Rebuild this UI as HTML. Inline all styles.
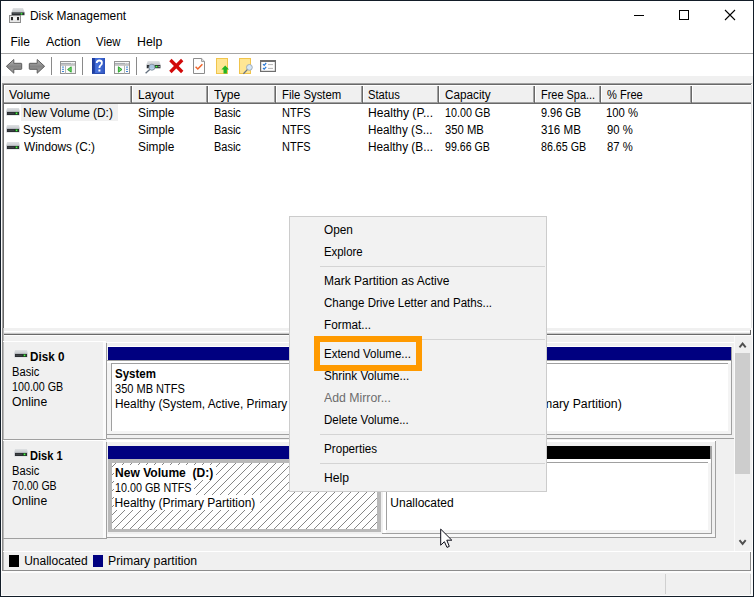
<!DOCTYPE html>
<html>
<head>
<meta charset="utf-8">
<title>Disk Management</title>
<style>
*{box-sizing:border-box;margin:0;padding:0}
html,body{width:754px;height:597px;overflow:hidden;background:#f0f0f0}
body{position:relative;font-family:"Liberation Sans",sans-serif;font-size:12px;color:#000;line-height:14px}
.a{position:absolute}
.t{position:absolute;white-space:nowrap;transform-origin:0 0;height:14px;line-height:14px}
.b{font-weight:bold}
svg{position:absolute;overflow:visible}
</style>
</head>
<body>
<!-- title bar / menu / toolbar -->
<div class="a" style="left:1px;top:1px;width:752px;height:52px;background:#fff"></div>
<div class="a" style="left:1px;top:53px;width:752px;height:1px;background:#a6a6a6"></div>
<div class="a" style="left:1px;top:54px;width:752px;height:22px;background:#fff"></div>

<!-- window controls -->
<svg style="left:634px;top:10px" width="110" height="12" viewBox="0 0 110 12">
 <path d="M0 5.5H10" stroke="#000" stroke-width="1" fill="none"/>
 <rect x="45.5" y="0.5" width="9" height="9" stroke="#000" stroke-width="1" fill="none"/>
 <path d="M91 0L101 10M101 0L91 10" stroke="#000" stroke-width="1.1" fill="none"/>
</svg>

<!-- title icon -->
<svg style="left:9px;top:8px" width="16" height="15" viewBox="0 0 16 15">
 <defs><linearGradient id="dtop" x1="0" y1="0" x2="0" y2="1"><stop offset="0" stop-color="#e2e4e6"/><stop offset="1" stop-color="#c2c6ca"/></linearGradient></defs>
 <path d="M4 0H14L15.5 4.3H2.6Z" fill="url(#dtop)"/>
 <rect x="2.6" y="4.3" width="12.9" height="2.9" fill="#2c2f33"/>
 <rect x="3.5" y="5" width="7.5" height="1" fill="#4a4e52"/>
 <circle cx="12.5" cy="5.7" r="1" fill="#35e035"/>
 <rect x="0.5" y="7.5" width="11" height="7" fill="#e8e8e8" stroke="#8c8c8c"/>
 <rect x="2" y="9" width="2" height="3.2" fill="#2a2a2a"/>
 <rect x="8" y="9" width="2" height="3.2" fill="#2a2a2a"/>
 <rect x="4.5" y="9.6" width="3" height="2" fill="#fafafa"/>
</svg>

<!-- toolbar arrows -->
<svg style="left:6px;top:59px" width="16" height="15" viewBox="0 0 16 15">
 <defs><linearGradient id="ag" x1="0" y1="0" x2="0" y2="1"><stop offset="0" stop-color="#bcbcbc"/><stop offset="0.5" stop-color="#858585"/><stop offset="1" stop-color="#a4a4a4"/></linearGradient></defs>
 <path d="M0.4 7.3L7.8 0.5V4.3H15.2Q15.7 4.3 15.7 4.8V9.8Q15.7 10.3 15.2 10.3H7.8V14.2Z" fill="url(#ag)" stroke="#5c5c5c" stroke-width="1" stroke-linejoin="round"/>
</svg>
<svg style="left:29px;top:59px" width="16" height="15" viewBox="0 0 16 15">
 <path d="M15.6 7.3L8.2 0.5V4.3H0.8Q0.3 4.3 0.3 4.8V9.8Q0.3 10.3 0.8 10.3H8.2V14.2Z" fill="url(#ag)" stroke="#5c5c5c" stroke-width="1" stroke-linejoin="round"/>
</svg>
<!-- separators -->
<div class="a" style="left:51px;top:57px;width:1px;height:18px;background:#8a8a8a"></div>
<div class="a" style="left:82px;top:57px;width:1px;height:18px;background:#8a8a8a"></div>
<div class="a" style="left:136px;top:57px;width:1px;height:18px;background:#8a8a8a"></div>

<!-- show/hide console tree -->
<svg style="left:60px;top:61px" width="16" height="13" viewBox="0 0 16 13">
 <rect x="0.5" y="0.5" width="15" height="12" fill="#fcfcfc" stroke="#949494"/>
 <rect x="1" y="1" width="14" height="1" fill="#f4f4f4"/>
 <rect x="1" y="2" width="14" height="1.2" fill="#a9adb2"/>
 <rect x="11.2" y="1.3" width="1.3" height="1.3" fill="#fff"/><rect x="13.2" y="1.3" width="1.3" height="1.3" fill="#fff"/>
 <path d="M1 4H15" stroke="#9a9a9a" stroke-width="1"/>
 <path d="M5.5 4.5V12.5" stroke="#b4b4b4" stroke-width="1"/>
 <rect x="2" y="5.6" width="2" height="1" fill="#3f86d6"/>
 <rect x="2" y="7.8" width="2" height="1" fill="#3f86d6"/>
 <rect x="2" y="10" width="2" height="1" fill="#3f86d6"/>
 <path d="M7.6 8.5L11.2 5.8V11.2Z" fill="#6ed06e" stroke="#23a023" stroke-width="0.9" stroke-linejoin="round"/>
 <rect x="12.2" y="5" width="2.6" height="7" fill="#f0f0f0"/>
</svg>
<!-- help -->
<svg style="left:92px;top:58px" width="13" height="16" viewBox="0 0 13 16">
 <defs><linearGradient id="hg" x1="0" y1="0" x2="1" y2="0"><stop offset="0" stop-color="#1b3896"/><stop offset="0.22" stop-color="#2446ac"/><stop offset="0.28" stop-color="#4470dc"/><stop offset="0.8" stop-color="#3a62cc"/><stop offset="1" stop-color="#2c50b8"/></linearGradient></defs>
 <rect x="0" y="0" width="13" height="16" fill="url(#hg)"/>
 <rect x="0" y="15" width="13" height="1" fill="#2a4cae"/>
 <path d="M4.7 5.1Q4.7 2.5 7.3 2.5Q9.9 2.5 9.9 4.9Q9.9 6.3 8.5 7.4Q7.4 8.2 7.4 10" stroke="#fff" stroke-width="1.8" fill="none"/>
 <rect x="6.4" y="11.5" width="2" height="2" fill="#fff"/>
</svg>
<!-- action pane -->
<svg style="left:114px;top:61px" width="16" height="13" viewBox="0 0 16 13">
 <rect x="0.5" y="0.5" width="15" height="12" fill="#fcfcfc" stroke="#949494"/>
 <rect x="1" y="1" width="14" height="1" fill="#f4f4f4"/>
 <rect x="1" y="2" width="14" height="1.2" fill="#a9adb2"/>
 <rect x="11.2" y="1.3" width="1.3" height="1.3" fill="#fff"/><rect x="13.2" y="1.3" width="1.3" height="1.3" fill="#fff"/>
 <path d="M1 4H15" stroke="#9a9a9a" stroke-width="1"/>
 <path d="M10.5 4.5V12.5" stroke="#b4b4b4" stroke-width="1"/>
 <rect x="12" y="5.6" width="2" height="1" fill="#3f86d6"/>
 <rect x="12" y="7.8" width="2" height="1" fill="#3f86d6"/>
 <rect x="12" y="10" width="2" height="1" fill="#3f86d6"/>
 <path d="M8 8.5L4.4 5.8V11.2Z" fill="#6ed06e" stroke="#23a023" stroke-width="0.9" stroke-linejoin="round"/>
</svg>
<!-- disk + magnifier -->
<svg style="left:145px;top:60px" width="16" height="14" viewBox="0 0 16 14">
 <path d="M1.2 4.8L2.8 1H14.2L15.8 4.8V8.6H1.2Z" fill="#e4e6e8"/>
 <path d="M3 1H14L15.5 5H1.5Z" fill="url(#dtop)"/>
 <rect x="1.8" y="5" width="13.6" height="3.2" fill="#2c2f33"/>
 <rect x="10.2" y="5.7" width="2.6" height="1.8" fill="#1c8a1c"/>
 <rect x="10.8" y="6" width="1.5" height="1.2" fill="#52f652"/>
 <rect x="13.5" y="6" width="1.2" height="1.2" fill="#cfcfcf"/>
 <circle cx="6.9" cy="7.2" r="3" fill="#b4d2ee" fill-opacity="0.92" stroke="#7f8c9a" stroke-width="0.9"/>
 <path d="M4.7 9.4L0.6 13.2" stroke="#64707e" stroke-width="1.3"/>
</svg>
<!-- red X -->
<svg style="left:169px;top:59px" width="15" height="14" viewBox="0 0 15 14">
 <path d="M1.4 1L13.2 13M13.2 1L1.4 13" stroke="#d20a0a" stroke-width="3.3" fill="none"/>
</svg>
<!-- doc with check -->
<svg style="left:193px;top:58px" width="13" height="16" viewBox="0 0 13 16">
 <path d="M0.5 0.5H8.6L11.5 3.4V15.5H0.5Z" fill="#fdfdfd" stroke="#8c8c8c"/>
 <path d="M8.6 0.5V3.4H11.5" fill="#ececec" stroke="#8c8c8c" stroke-width="0.9"/>
 <path d="M2.6 8.8L4.8 11L9.4 6.2" stroke="#f0642a" stroke-width="1.5" fill="none"/>
</svg>
<!-- yellow doc up arrow -->
<svg style="left:216px;top:58px" width="13" height="16" viewBox="0 0 13 16">
 <rect x="0.5" y="0.5" width="11" height="15" fill="#ffe694" stroke="#f0c44c"/>
 <path d="M9.2 7.4L13 11.6H10.9V15.6H7.5V11.6H5.4Z" fill="#22b422"/>
</svg>
<!-- yellow doc magnifier -->
<svg style="left:239px;top:58px" width="14" height="16" viewBox="0 0 14 16">
 <rect x="0.5" y="0.5" width="11" height="15" fill="#ffe694" stroke="#f0c44c"/>
 <circle cx="10.4" cy="9.4" r="2.9" fill="#d4e6f6" stroke="#9aa6b4" stroke-width="0.9"/>
 <path d="M8.3 11.6L4.4 15.8" stroke="#6a7684" stroke-width="1.3"/>
</svg>
<!-- checklist -->
<svg style="left:260px;top:60px" width="16" height="12" viewBox="0 0 16 12">
 <rect x="0.6" y="0.6" width="14.8" height="10.8" fill="#fdfdfd" stroke="#6e6e6e" stroke-width="1.2"/>
 <rect x="0.6" y="0.6" width="14.8" height="1.4" fill="#6e6e6e"/>
 <path d="M3 4.2L4.2 5.4L6.2 3" stroke="#2a7ad8" stroke-width="1.2" fill="none"/>
 <path d="M3 8L4.2 9.2L6.2 6.8" stroke="#2a7ad8" stroke-width="1.2" fill="none"/>
 <path d="M8 4.6H13M8 8.4H13" stroke="#b4b4b4" stroke-width="1"/>
</svg>


<!-- top list -->
<div class="a" style="left:2px;top:83px;width:750px;height:245px;background:#fff"></div>
<div class="a" style="left:2px;top:83px;width:750px;height:1px;background:#a0a0a0"></div>
<div class="a" style="left:2px;top:83px;width:1px;height:245px;background:#a0a0a0"></div>
<div class="a" style="left:3px;top:84px;width:749px;height:1px;background:#696969"></div>
<div class="a" style="left:3px;top:84px;width:1px;height:244px;background:#696969"></div>
<!-- header -->
<div class="a" style="left:4px;top:85px;width:748px;height:18px;background:#f0f0f0"></div>
<div class="a" style="left:4px;top:102px;width:748px;height:1px;background:#a0a0a0"></div>
<div class="a" style="left:4px;top:103px;width:748px;height:1px;background:#696969"></div>
<!--HEADERDIV-->
<!-- selected item -->
<div class="a" style="left:21px;top:104px;width:97px;height:17px;background:#f0f0f0"></div>

<!-- splitter -->
<div class="a" style="left:4px;top:331px;width:746px;height:1px;background:#fff"></div>
<div class="a" style="left:4px;top:333px;width:746px;height:1px;background:#c8c8c8"></div>
<div class="a" style="left:750px;top:330px;width:1px;height:5px;background:#696969"></div>
<!-- lower panel -->
<div class="a" style="left:3px;top:334px;width:748px;height:1px;background:#696969"></div>
<div class="a" style="left:3px;top:335px;width:749px;height:1px;background:#fcfcfc"></div>
<div class="a" style="left:2px;top:328px;width:1px;height:243px;background:#8c8c8c"></div>
<div class="a" style="left:3px;top:328px;width:1px;height:243px;background:#b8b8b8"></div>

<!-- disk label 0 -->
<div class="a" style="left:3px;top:341px;width:103px;height:1px;background:#fff"></div>
<div class="a" style="left:103px;top:342px;width:3px;height:97px;background:#fbfbfb"></div>
<div class="a" style="left:106px;top:343px;width:1px;height:96px;background:#a0a0a0"></div>
<div class="a" style="left:3px;top:439px;width:103px;height:1px;background:#a0a0a0"></div>
<!-- disk label 1 -->
<div class="a" style="left:3px;top:440px;width:103px;height:1px;background:#fff"></div>
<div class="a" style="left:103px;top:441px;width:3px;height:97px;background:#fbfbfb"></div>
<div class="a" style="left:106px;top:442px;width:1px;height:96px;background:#a0a0a0"></div>
<div class="a" style="left:3px;top:538px;width:104px;height:1px;background:#a0a0a0"></div>
<div class="a" style="left:107px;top:537px;width:609px;height:1px;background:#a0a0a0"></div>

<!-- disk 0 partitions -->
<div class="a" style="left:107px;top:342px;width:627px;height:1px;background:#fff"></div>
<div class="a" style="left:107px;top:346px;width:625px;height:1px;background:#fff"></div>
<div class="a" style="left:108px;top:347px;width:623px;height:13px;background:#000080"></div>
<div class="a" style="left:107px;top:360px;width:625px;height:1px;background:#a0a0a0"></div>
<div class="a" style="left:107px;top:361px;width:625px;height:74px;background:#f4f4f4"></div>
<div class="a" style="left:107px;top:361px;width:625px;height:2px;background:#fff"></div>
<div class="a" style="left:111px;top:363px;width:617px;height:68px;background:#fff;border-left:1px solid #a0a0a0;border-top:1px solid #a0a0a0"></div>
<div class="a" style="left:731px;top:347px;width:1px;height:88px;background:#a0a0a0"></div>
<div class="a" style="left:107px;top:434px;width:625px;height:1px;background:#a0a0a0"></div>
<div class="a" style="left:107px;top:438px;width:627px;height:1px;background:#a0a0a0"></div>

<!-- disk 1 partitions -->
<div class="a" style="left:107px;top:440px;width:609px;height:2px;background:#fff"></div>
<div class="a" style="left:715px;top:441px;width:1px;height:97px;background:#a0a0a0"></div>
<div class="a" style="left:108px;top:446px;width:273px;height:13px;background:#000080"></div>
<div class="a" style="left:385px;top:446px;width:325px;height:13px;background:#000"></div>
<div class="a" style="left:710px;top:446px;width:2px;height:13px;background:#a0a0a0"></div>
<!-- selected partition -->
<div class="a" style="left:108px;top:459px;width:273px;height:73px;background:#b9b9b9"></div>
<svg style="left:112px;top:463px" width="265" height="66" viewBox="0 0 265 66" shape-rendering="crispEdges">
 <defs><pattern id="hatch" width="8" height="8" patternUnits="userSpaceOnUse" x="4" y="0">
  <rect width="8" height="8" fill="#fff"/>
  <path d="M0 7h1v1h-1zM1 6h1v1h-1zM2 5h1v1h-1zM3 4h1v1h-1zM4 3h1v1h-1zM5 2h1v1h-1zM6 1h1v1h-1zM7 0h1v1h-1z" fill="#868686"/>
 </pattern></defs>
 <rect width="265" height="66" fill="url(#hatch)"/>
</svg>
<div class="a" style="left:114px;top:465px;width:102px;height:15px;background:#fff"></div>
<div class="a" style="left:114px;top:480px;width:80px;height:15px;background:#fff"></div>
<div class="a" style="left:114px;top:495px;width:146px;height:15px;background:#fff"></div>
<!-- unallocated -->
<div class="a" style="left:383px;top:459px;width:329px;height:76px;background:#f4f4f4"></div>
<div class="a" style="left:383px;top:459px;width:329px;height:4px;background:#fff"></div>
<div class="a" style="left:383px;top:459px;width:3px;height:74px;background:#fff"></div>
<div class="a" style="left:386px;top:462px;width:322px;height:68px;background:#fff;border-left:1px solid #a0a0a0;border-top:1px solid #a0a0a0"></div>
<div class="a" style="left:711px;top:459px;width:1px;height:75px;background:#a0a0a0"></div>
<div class="a" style="left:382px;top:533px;width:330px;height:1px;background:#a0a0a0"></div>
<div class="a" style="left:107px;top:534px;width:608px;height:3px;background:#f8f8f8"></div>

<!-- scrollbar -->
<div class="a" style="left:734px;top:336px;width:17px;height:215px;background:#f0f0f0"></div>
<div class="a" style="left:734px;top:336px;width:1px;height:215px;background:#fafafa"></div>
<div class="a" style="left:735px;top:353px;width:15px;height:121px;background:#cdcdcd"></div>
<svg style="left:739px;top:341px" width="8" height="7" viewBox="0 0 8 7"><path d="M0.5 6.3L3.6 2.6L6.7 6.3" stroke="#505050" stroke-width="1.9" fill="none"/></svg>
<svg style="left:739px;top:539px" width="8" height="7" viewBox="0 0 8 7"><path d="M0.5 1.2L3.6 4.9L6.7 1.2" stroke="#505050" stroke-width="1.9" fill="none"/></svg>


<!-- legend -->
<div class="a" style="left:3px;top:551px;width:748px;height:1px;background:#fff"></div>
<div class="a" style="left:9px;top:555px;width:10px;height:12px;background:#000"></div>
<div class="a" style="left:93px;top:555px;width:10px;height:12px;background:#000080"></div>
<div class="a" style="left:750px;top:552px;width:1px;height:19px;background:#8c8c8c"></div>
<div class="a" style="left:2px;top:570px;width:749px;height:1px;background:#8c8c8c"></div>
<div class="a" style="left:2px;top:571px;width:750px;height:2px;background:#fcfcfc"></div>
<!-- status bar -->
<div class="a" style="left:665px;top:574px;width:1px;height:20px;background:#d0d0d0"></div>
<div class="a" style="left:750px;top:574px;width:1px;height:20px;background:#d0d0d0"></div>

<div class="t" style="left:29.61px;top:9.0px;transform:scaleX(0.9943);">Disk Management</div>
<div class="t" style="left:10.50px;top:35.0px;">File</div>
<div class="t" style="left:45.50px;top:35.0px;transform:scaleX(1.0382);">Action</div>
<div class="t" style="left:96.20px;top:35.0px;transform:scaleX(0.9476);">View</div>
<div class="t" style="left:136.67px;top:35.0px;transform:scaleX(1.0280);">Help</div>
<div class="t" style="left:9.30px;top:87.5px;transform:scaleX(1.0278);">Volume</div>
<div class="t" style="left:137.61px;top:87.5px;transform:scaleX(0.9943);">Layout</div>
<div class="t" style="left:214.15px;top:87.5px;transform:scaleX(1.0099);">Type</div>
<div class="t" style="left:281.55px;top:87.5px;transform:scaleX(0.9459);">File System</div>
<div class="t" style="left:368.33px;top:87.5px;transform:scaleX(0.9333);">Status</div>
<div class="t" style="left:444.71px;top:87.5px;transform:scaleX(0.9795);">Capacity</div>
<div class="t" style="left:540.99px;top:87.5px;transform:scaleX(0.9118);">Free Spa...</div>
<div class="t" style="left:606.94px;top:87.5px;transform:scaleX(0.9245);">% Free</div>
<div class="t" style="left:22.61px;top:105.5px;transform:scaleX(0.9910);">New Volume (D:)</div>
<div class="t" style="left:138.11px;top:105.5px;transform:scaleX(0.9874);">Simple</div>
<div class="t" style="left:214.29px;top:105.5px;transform:scaleX(0.9143);">Basic</div>
<div class="t" style="left:281.59px;top:105.5px;transform:scaleX(0.9143);">NTFS</div>
<div class="t" style="left:367.79px;top:105.5px;transform:scaleX(1.0080);">Healthy (P...</div>
<div class="t" style="left:444.81px;top:105.5px;transform:scaleX(0.8939);">10.00 GB</div>
<div class="t" style="left:540.85px;top:105.5px;transform:scaleX(0.9093);">9.96 GB</div>
<div class="t" style="left:606.46px;top:105.5px;transform:scaleX(0.9435);">100 %</div>
<div class="t" style="left:23.12px;top:122.5px;transform:scaleX(0.9548);">System</div>
<div class="t" style="left:138.11px;top:122.5px;transform:scaleX(0.9874);">Simple</div>
<div class="t" style="left:214.29px;top:122.5px;transform:scaleX(0.9143);">Basic</div>
<div class="t" style="left:281.59px;top:122.5px;transform:scaleX(0.9143);">NTFS</div>
<div class="t" style="left:367.82px;top:122.5px;transform:scaleX(0.9766);">Healthy (S...</div>
<div class="t" style="left:445.23px;top:122.5px;transform:scaleX(0.9391);">350 MB</div>
<div class="t" style="left:540.82px;top:122.5px;transform:scaleX(0.9640);">316 MB</div>
<div class="t" style="left:606.93px;top:122.5px;transform:scaleX(0.9396);">90 %</div>
<div class="t" style="left:23.60px;top:139.5px;transform:scaleX(0.9867);">Windows (C:)</div>
<div class="t" style="left:138.11px;top:139.5px;transform:scaleX(0.9874);">Simple</div>
<div class="t" style="left:214.29px;top:139.5px;transform:scaleX(0.9143);">Basic</div>
<div class="t" style="left:281.59px;top:139.5px;transform:scaleX(0.9143);">NTFS</div>
<div class="t" style="left:367.82px;top:139.5px;transform:scaleX(0.9844);">Healthy (B...</div>
<div class="t" style="left:445.26px;top:139.5px;transform:scaleX(0.8848);">99.66 GB</div>
<div class="t" style="left:540.85px;top:139.5px;transform:scaleX(0.8909);">86.65 GB</div>
<div class="t" style="left:606.93px;top:139.5px;transform:scaleX(0.9396);">87 %</div>
<div class="t b" style="left:29.97px;top:350.0px;transform:scaleX(0.9723);">Disk 0</div>
<div class="t" style="left:11.77px;top:365.0px;transform:scaleX(0.9286);">Basic</div>
<div class="t" style="left:11.51px;top:380.0px;transform:scaleX(0.8933);">100.00 GB</div>
<div class="t" style="left:12.19px;top:395.0px;transform:scaleX(1.0133);">Online</div>
<div class="t b" style="left:30.01px;top:449.0px;transform:scaleX(0.9226);">Disk 1</div>
<div class="t" style="left:11.77px;top:464.0px;transform:scaleX(0.9286);">Basic</div>
<div class="t" style="left:11.96px;top:479.0px;transform:scaleX(0.8808);">70.00 GB</div>
<div class="t" style="left:12.19px;top:494.0px;transform:scaleX(1.0133);">Online</div>
<div class="t b" style="left:115.02px;top:367.0px;transform:scaleX(0.9590);">System</div>
<div class="t" style="left:115.04px;top:382.0px;transform:scaleX(0.9200);">350 MB NTFS</div>
<div class="t" style="left:114.61px;top:396.6px;transform:scaleX(0.9859);">Healthy (System, Active, Primary</div>
<div class="t" style="left:542.43px;top:396.6px;transform:scaleX(1.0222);">mary Partition)</div>
<div class="t b" style="left:114.85px;top:465.5px;transform:scaleX(1.0052);">New Volume&nbsp; (D:)</div>
<div class="t" style="left:114.70px;top:480.7px;transform:scaleX(0.8967);">10.00 GB NTFS</div>
<div class="t" style="left:114.60px;top:495.8px;">Healthy (Primary Partition)</div>
<div class="t" style="left:389.86px;top:465.5px;transform:scaleX(0.8889);">60.00 GB</div>
<div class="t" style="left:390.30px;top:495.9px;">Unallocated</div>
<div class="t" style="left:24.20px;top:553.8px;">Unallocated</div>
<div class="t" style="left:108.38px;top:553.8px;transform:scaleX(1.0204);">Primary partition</div>

<!-- context menu -->
<div class="a" id="menu" style="left:289px;top:216px;width:258px;height:276px;background:#f2f2f2;border:1px solid #cccccc"></div>
<div class="a" style="left:130px;top:86px;width:1px;height:17px;background:#a0a0a0"></div>
<div class="a" style="left:131px;top:85px;width:1px;height:19px;background:#696969"></div>
<div class="a" style="left:132px;top:85px;width:1px;height:17px;background:#fff"></div>
<div class="a" style="left:206px;top:86px;width:1px;height:17px;background:#a0a0a0"></div>
<div class="a" style="left:207px;top:85px;width:1px;height:19px;background:#696969"></div>
<div class="a" style="left:208px;top:85px;width:1px;height:17px;background:#fff"></div>
<div class="a" style="left:274px;top:86px;width:1px;height:17px;background:#a0a0a0"></div>
<div class="a" style="left:275px;top:85px;width:1px;height:19px;background:#696969"></div>
<div class="a" style="left:276px;top:85px;width:1px;height:17px;background:#fff"></div>
<div class="a" style="left:361px;top:86px;width:1px;height:17px;background:#a0a0a0"></div>
<div class="a" style="left:362px;top:85px;width:1px;height:19px;background:#696969"></div>
<div class="a" style="left:363px;top:85px;width:1px;height:17px;background:#fff"></div>
<div class="a" style="left:437px;top:86px;width:1px;height:17px;background:#a0a0a0"></div>
<div class="a" style="left:438px;top:85px;width:1px;height:19px;background:#696969"></div>
<div class="a" style="left:439px;top:85px;width:1px;height:17px;background:#fff"></div>
<div class="a" style="left:533px;top:86px;width:1px;height:17px;background:#a0a0a0"></div>
<div class="a" style="left:534px;top:85px;width:1px;height:19px;background:#696969"></div>
<div class="a" style="left:535px;top:85px;width:1px;height:17px;background:#fff"></div>
<div class="a" style="left:599px;top:86px;width:1px;height:17px;background:#a0a0a0"></div>
<div class="a" style="left:600px;top:85px;width:1px;height:19px;background:#696969"></div>
<div class="a" style="left:601px;top:85px;width:1px;height:17px;background:#fff"></div>
<div class="a" style="left:690px;top:86px;width:1px;height:17px;background:#a0a0a0"></div>
<div class="a" style="left:691px;top:85px;width:1px;height:19px;background:#696969"></div>
<div class="a" style="left:692px;top:85px;width:1px;height:17px;background:#fff"></div>
<div class="a" style="left:4px;top:85px;width:748px;height:1px;background:#fff"></div>
<div class="a" style="left:4px;top:85px;width:1px;height:17px;background:#fff"></div>
<svg width="0" height="0" style="left:0;top:0"><defs><linearGradient id="dk" x1="0" y1="0" x2="0" y2="1"><stop offset="0" stop-color="#dfe1e3"/><stop offset="1" stop-color="#c3c7cb"/></linearGradient></defs></svg>
<svg style="left:6px;top:108px" width="14" height="8" viewBox="0 0 14 8">
 <path d="M0.2 3.4L1 0H13L13.8 3.4V7.7H0.2Z" fill="#dfe2e5"/>
 <path d="M1.1 0H12.9L13.6 3.9H0.4Z" fill="url(#dk)"/>
 <rect x="0.9" y="3.9" width="12.2" height="3.1" fill="#2b2e32"/>
 <rect x="1.7" y="4.9" width="6.3" height="0.9" fill="#44484c"/>
 <rect x="9.2" y="4.4" width="2.6" height="2" fill="#1a7a1a"/>
 <rect x="9.9" y="4.7" width="1.3" height="1.4" fill="#52f652"/>
</svg>
<svg style="left:6px;top:125px" width="14" height="8" viewBox="0 0 14 8">
 <path d="M0.2 3.4L1 0H13L13.8 3.4V7.7H0.2Z" fill="#dfe2e5"/>
 <path d="M1.1 0H12.9L13.6 3.9H0.4Z" fill="url(#dk)"/>
 <rect x="0.9" y="3.9" width="12.2" height="3.1" fill="#2b2e32"/>
 <rect x="1.7" y="4.9" width="6.3" height="0.9" fill="#44484c"/>
 <rect x="9.2" y="4.4" width="2.6" height="2" fill="#1a7a1a"/>
 <rect x="9.9" y="4.7" width="1.3" height="1.4" fill="#52f652"/>
</svg>
<svg style="left:6px;top:142px" width="14" height="8" viewBox="0 0 14 8">
 <path d="M0.2 3.4L1 0H13L13.8 3.4V7.7H0.2Z" fill="#dfe2e5"/>
 <path d="M1.1 0H12.9L13.6 3.9H0.4Z" fill="url(#dk)"/>
 <rect x="0.9" y="3.9" width="12.2" height="3.1" fill="#2b2e32"/>
 <rect x="1.7" y="4.9" width="6.3" height="0.9" fill="#44484c"/>
 <rect x="9.2" y="4.4" width="2.6" height="2" fill="#1a7a1a"/>
 <rect x="9.9" y="4.7" width="1.3" height="1.4" fill="#52f652"/>
</svg>
<svg style="left:14px;top:350px" width="14" height="8" viewBox="0 0 14 8">
 <path d="M0.2 3.4L1 0H13L13.8 3.4V7.7H0.2Z" fill="#dfe2e5"/>
 <path d="M1.1 0H12.9L13.6 3.9H0.4Z" fill="url(#dk)"/>
 <rect x="0.9" y="3.9" width="12.2" height="3.1" fill="#2b2e32"/>
 <rect x="1.7" y="4.9" width="6.3" height="0.9" fill="#44484c"/>
 <rect x="9.2" y="4.4" width="2.6" height="2" fill="#1a7a1a"/>
 <rect x="9.9" y="4.7" width="1.3" height="1.4" fill="#52f652"/>
</svg>
<svg style="left:14px;top:449px" width="14" height="8" viewBox="0 0 14 8">
 <path d="M0.2 3.4L1 0H13L13.8 3.4V7.7H0.2Z" fill="#dfe2e5"/>
 <path d="M1.1 0H12.9L13.6 3.9H0.4Z" fill="url(#dk)"/>
 <rect x="0.9" y="3.9" width="12.2" height="3.1" fill="#2b2e32"/>
 <rect x="1.7" y="4.9" width="6.3" height="0.9" fill="#44484c"/>
 <rect x="9.2" y="4.4" width="2.6" height="2" fill="#1a7a1a"/>
 <rect x="9.9" y="4.7" width="1.3" height="1.4" fill="#52f652"/>
</svg>
<div class="a" style="left:320px;top:266px;width:225px;height:1px;background:#d4d4d4"></div>
<div class="a" style="left:320px;top:339px;width:225px;height:1px;background:#d4d4d4"></div>
<div class="a" style="left:320px;top:434px;width:225px;height:1px;background:#d4d4d4"></div>
<div class="a" style="left:320px;top:463px;width:225px;height:1px;background:#d4d4d4"></div>
<div class="t" style="left:323.91px;top:223.0px;transform:scaleX(0.9841);">Open</div>
<div class="t" style="left:324.05px;top:245.0px;transform:scaleX(0.9478);">Explore</div>
<div class="t" style="left:324.00px;top:273.6px;">Mark Partition as Active</div>
<div class="t" style="left:323.92px;top:295.6px;transform:scaleX(0.9616);">Change Drive Letter and Paths...</div>
<div class="t" style="left:324.02px;top:317.6px;transform:scaleX(0.9804);">Format...</div>
<div class="t" style="left:324.04px;top:347.0px;transform:scaleX(0.9577);">Extend Volume...</div>
<div class="t" style="left:323.71px;top:369.0px;transform:scaleX(0.9749);">Shrink Volume...</div>
<div class="t" style="left:324.20px;top:391.0px;transform:scaleX(1.0241);color:#6d6d6d;">Add Mirror...</div>
<div class="t" style="left:324.04px;top:413.0px;transform:scaleX(0.9628);">Delete Volume...</div>
<div class="t" style="left:324.03px;top:442.0px;transform:scaleX(0.9709);">Properties</div>
<div class="t" style="left:323.98px;top:470.8px;transform:scaleX(1.0151);">Help</div>
<!-- orange highlight -->
<div class="a" style="left:314px;top:336px;width:108px;height:35px;border:6px solid #ff9a00"></div>

<svg style="left:440px;top:528px" width="14" height="21" viewBox="0 0 14 21">
 <path d="M0.7 1.1V17.2L4.4 13.7L7 19.4L9.3 18.4L6.8 12.2H11.8Z" fill="#fff" stroke="#0c0c18" stroke-width="1" stroke-linejoin="miter"/>
</svg>


<!-- window frame -->
<div class="a" style="left:1px;top:54px;width:1px;height:542px;background:#fafafa"></div>
<div class="a" style="left:751px;top:84px;width:2px;height:512px;background:#fcfcfc"></div>
<div class="a" style="left:751px;top:85px;width:1px;height:243px;background:#e3e3e3"></div>
<div class="a" style="left:751px;top:336px;width:1px;height:215px;background:#f0f0f0"></div>
<div class="a" style="left:1px;top:595px;width:752px;height:1px;background:#fcfcfc"></div>
<div class="a" style="left:0;top:0;width:754px;height:597px;border:1px solid #131d28"></div>
</body>
</html>
